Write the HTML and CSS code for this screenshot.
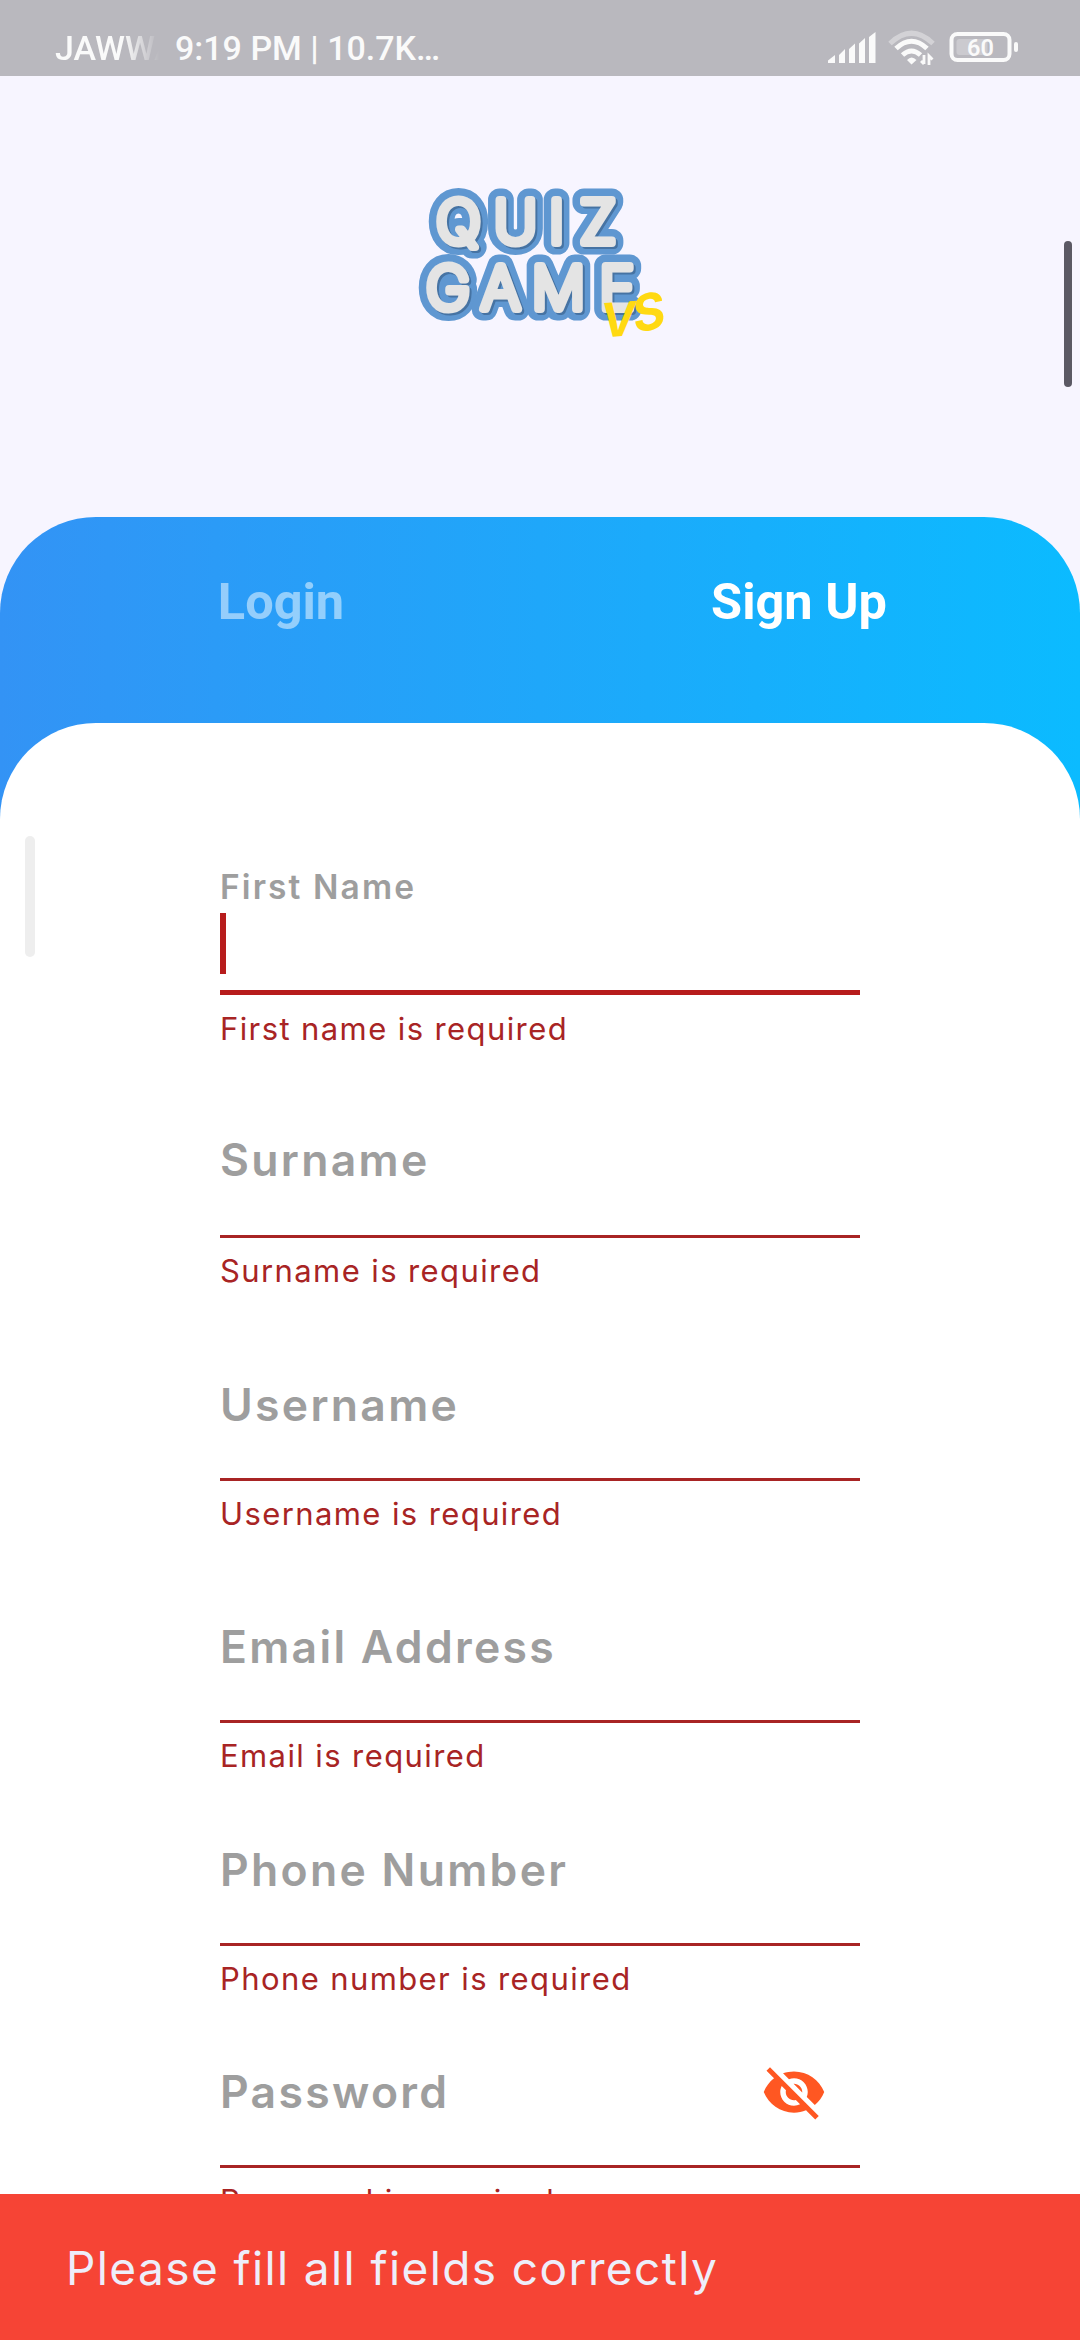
FILE: index.html
```html
<!DOCTYPE html>
<html lang="en">
<head>
<meta charset="utf-8">
<title>Quiz Game VS</title>
<link rel="stylesheet" href="styles.css">
</head>
<body>
<div class="screen">
  <header class="status">
    <span class="carrier">JAWWA</span>
    <span class="clock">9:19 PM | 10.7K…</span>
    <svg class="status-icons" width="200" height="40" viewBox="0 0 200 40">
      <g fill="#fafafa">
        <path d="M0 33V30.500L7 25V33ZM11 33V25L17 19V33ZM21 33V19L27 13.500V33ZM31 33V13.500L37 8V33ZM41 33V7L47.500 2V33Z"/>
      </g>
      <g fill="none" stroke="#fafafa" stroke-width="5">
        <path d="M62 13.500Q83.500-7 105 13.500" opacity=".4"/>
        <path d="M68 18.500Q83.500 4 99 18.500"/>
        <path d="M74.500 25Q83.500 17 92.500 25"/>
      </g>
      <path d="M79 30Q83.500 25 88.500 30L83.500 34.500Z" fill="#fafafa"/>
      <path d="M96 25V34M93 31L96 34M101 35V26L104.500 29.500" stroke="#fafafa" stroke-width="2.800" fill="none"/>
      <rect x="123.500" y="4" width="58" height="26" rx="6" fill="none" stroke="#fafafa" stroke-width="4"/>
      <rect x="128.500" y="9" width="31" height="16" rx="3" fill="#cbcacf"/>
      <rect x="186" y="12" width="4" height="10" rx="2" fill="#fafafa"/>
      <text x="152.500" y="25.500" text-anchor="middle" class="battery">60</text>
    </svg>
  </header>

  <section class="hero">
    <svg class="logo" width="260" height="170" viewBox="410 180 260 170">
      <defs>
        <g id="word">
          <text text-anchor="middle" y="242.500" x="458.500 515.500 556.500 598">QUIZ</text>
          <text text-anchor="middle" y="308.500" x="448 500.500 558.500 617">GAME</text>
        </g>
      </defs>
      <use href="#word" class="logo-rim"/>
      <use href="#word" class="logo-shade" x="2" y="2"/>
      <use href="#word" class="logo-face"/>
      <text class="logo-vs" x="602" y="337.500" transform="rotate(-4 602 337)">V</text>
      <text class="logo-vs logo-s" x="636" y="333" transform="rotate(-12 636 333)">S</text>
    </svg>
    <i class="page-scroll"></i>
  </section>

  <main class="panel">
    <nav class="tabs">
      <a class="tab">Login</a>
      <a class="tab tab-active">Sign Up</a>
    </nav>
    <form class="sheet">
      <i class="form-scroll"></i>
      <div class="field focused">
        <label class="label">First Name</label>
        <div class="input"><i class="caret"></i></div>
        <p class="error">First name is required</p>
      </div>
      <div class="field raised"><div class="input"><label class="label">Surname</label></div><p class="error">Surname is required</p></div>
      <div class="field"><div class="input"><label class="label">Username</label></div><p class="error">Username is required</p></div>
      <div class="field"><div class="input"><label class="label">Email Address</label></div><p class="error">Email is required</p></div>
      <div class="field tight"><div class="input"><label class="label">Phone Number</label></div><p class="error">Phone number is required</p></div>
      <div class="field tight"><div class="input"><label class="label">Password</label>
        <svg class="eye" width="66" height="66" viewBox="0 0 24 24"><path fill="#ff5722" d="M12 7c2.760 0 5 2.240 5 5 0 .650-.130 1.260-.360 1.830l2.920 2.920c1.510-1.260 2.700-2.890 3.430-4.750-1.730-4.390-6-7.500-11-7.500-1.400 0-2.740.250-3.980.700l2.160 2.160C10.740 7.130 11.350 7 12 7zM2 4.270l2.280 2.280.460.460C3.080 8.300 1.780 10.020 1 12c1.730 4.390 6 7.500 11 7.500 1.550 0 3.030-.300 4.380-.840l.420.420L19.730 22 21 20.730 3.270 3 2 4.270zM7.530 9.800l1.550 1.550c-.050.210-.080.430-.080.650 0 1.660 1.340 3 3 3 .220 0 .440-.030.650-.080l1.550 1.550c-.670.330-1.410.530-2.200.530-2.760 0-5-2.240-5-5 0-.790.200-1.530.530-2.200zm4.310-.780l3.150 3.150.020-.160c0-1.660-1.340-3-3-3l-.170.010z"/></svg>
      </div><p class="error">Password is required</p></div>
    </form>
  </main>
  <div class="snackbar">Please fill all fields correctly</div>
</div>
</body>
</html>
```
FILE: styles.css
```css
* { box-sizing: border-box; }
body { margin: 0; background: #fff; }
.screen {
  position: relative;
  width: 1080px;
  height: 2340px;
  overflow: hidden;
  background: #f7f5ff;
  font-family: Inter, "Liberation Sans", sans-serif;
}
.status {
  display: flex;
  height: 76px;
  padding: 28px 52px 0 55px;
  background: #b9b8be;
  color: #fafafa;
  font: 500 34px/40px Roboto, sans-serif;
}
.carrier {
  width: 104px;
  overflow: hidden;
  -webkit-mask-image: linear-gradient(90deg, #000 65%, transparent);
  mask-image: linear-gradient(90deg, #000 65%, transparent);
}
.clock { margin-left: 16px; }
.status-icons { margin: 2px 0 0 auto; }
.battery { font: 600 23.500px Roboto, sans-serif; fill: #fafafa; }
.hero {
  position: relative;
  height: 441px;
  padding: 104px 0 0 410px;
}
.logo { display: block; }
.logo-rim, .logo-shade, .logo-face {
  font: 200 59px Inter, sans-serif;
  stroke-linejoin: round;
  stroke-linecap: round;
}
.logo-rim { fill: #5f97d1; stroke: #5f97d1; stroke-width: 23px; }
.logo-shade { fill: #4673a3; stroke: #4673a3; stroke-width: 8px; }
.logo-face { fill: #e4e4e4; stroke: #e4e4e4; stroke-width: 8px; }
.logo-vs { font: italic 700 47px Inter, sans-serif; fill: #ffd912; }
.logo-s { font-size: 50px; }
.page-scroll {
  position: absolute;
  top: 165px;
  right: 8px;
  width: 8px;
  height: 146px;
  border-radius: 4px;
  background: #5b5964;
}
.panel {
  height: 1823px;
  border-radius: 96px 96px 0 0;
  background: linear-gradient(90deg, #3393f5, #0bbbff);
}
.tabs {
  display: grid;
  grid-template-columns: 562px 474px;
  height: 206px;
  padding-top: 56px;
  font: 700 50.500px/58px Roboto, sans-serif;
  text-align: center;
  color: rgba(255, 255, 255, .5);
}
.tab-active { color: #fff; }
.sheet {
  position: relative;
  height: 1617px;
  padding: 113px 220px 0;
  border-radius: 96px 96px 0 0;
  background: #fff;
}
.form-scroll {
  position: absolute;
  top: 113px;
  left: 25px;
  width: 10px;
  height: 121px;
  border-radius: 5px;
  background: #eee;
}
.field { height: 242.500px; padding-top: 42px; }
.input {
  display: flex;
  align-items: center;
  justify-content: space-between;
  height: 118px;
  padding: 0 33px 31px 0;
  border-bottom: 3px solid #a82424;
}
.raised .input { padding-bottom: 35px; }
.label { color: #9e9e9e; font-weight: 600; font-size: 44.500px; line-height: 54px; letter-spacing: 2.300px; }
.error {
  margin: 0;
  padding-top: 13px;
  color: #a82424;
  font-size: 31px;
  line-height: 40px;
  letter-spacing: 1.400px;
}
.focused { height: 242px; padding-top: 31px; }
.focused .label { display: block; height: 40px; font-size: 33.500px; line-height: 40px; letter-spacing: 2.100px; }
.focused .input { align-items: flex-start; height: 88px; padding: 6px 0 0; border-bottom: 5px solid #b71c1c; }
.focused .error { padding-top: 14px; }
.caret { width: 6px; height: 61px; background: #b71c1c; }
.tight { height: 222.750px; padding-top: 22px; }
.snackbar {
  position: absolute;
  left: 0;
  right: 0;
  bottom: 0;
  height: 146px;
  padding: 46px 66px;
  background: #f64435;
  color: #eeeefa;
  font-size: 46px;
  line-height: 56px;
  letter-spacing: 1.400px;
}
```
